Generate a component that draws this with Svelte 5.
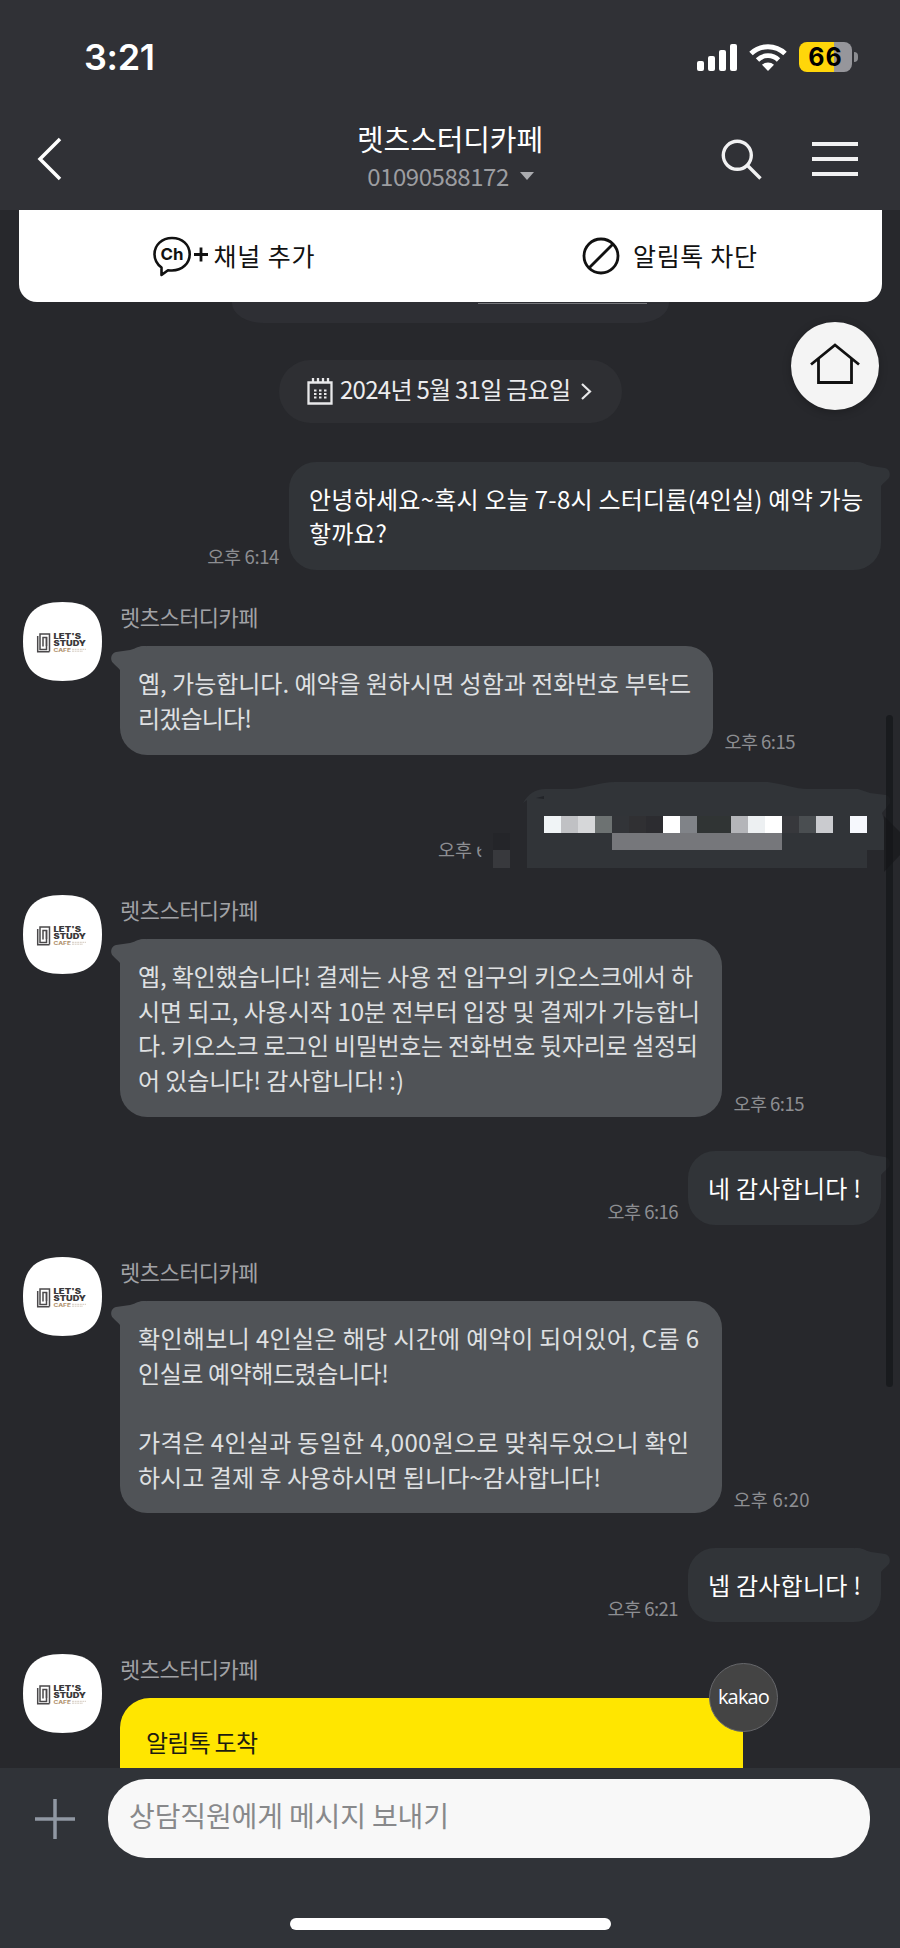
<script>
    const cafe = "렛츠스터디카페";

    const messages = [
        {
            me: true, time: "오후 6:14", timeWidth: 72, width: 592,
            lines: [
                { text: "안녕하세요~혹시 오늘 7-8시 스터디룸(4인실) 예약 가능", width: 554 },
                { text: "핳까요?", width: 78 },
            ],
        },
        {
            time: "오후 6:15", timeWidth: 71, width: 593,
            lines: [
                { text: "옙, 가능합니다. 예약을 원하시면 성함과 전화번호 부탁드", width: 553 },
                { text: "리겠습니다!", width: 114 },
            ],
        },
        { hidden: true },
        {
            time: "오후 6:15", timeWidth: 71, width: 602,
            lines: [
                { text: "옙, 확인했습니다! 결제는 사용 전 입구의 키오스크에서 하", width: 555 },
                { text: "시면 되고, 사용시작 10분 전부터 입장 및 결제가 가능합니", width: 562 },
                { text: "다. 키오스크 로그인 비밀번호는 전화번호 뒷자리로 설정되", width: 560 },
                { text: "어 있습니다! 감사합니다! :)", width: 266 },
            ],
        },
        {
            me: true, time: "오후 6:16", timeWidth: 71, width: 193,
            lines: [{ text: "네 감사합니다 !", width: 153 }],
        },
        {
            time: "오후 6:20", timeWidth: 76, width: 602,
            lines: [
                { text: "확인해보니 4인실은 해당 시간에 예약이 되어있어, C룸 6", width: 561 },
                { text: "인실로 예약해드렸습니다!", width: 251 },
                { text: "", width: 0 },
                { text: "가격은 4인실과 동일한 4,000원으로 맞춰두었으니 확인", width: 551 },
                { text: "하시고 결제 후 사용하시면 됩니다~감사합니다!", width: 463 },
            ],
        },
        {
            me: true, time: "오후 6:21", timeWidth: 71, width: 193,
            lines: [{ text: "넵 감사합니다 !", width: 153 }],
        },
        { alim: true },
    ];

    // couleurs des pixels qui cachent le numéro
    const pixels = [
        "#f0f4f6", "#c0c1c4", "#d6d7d9", "#6d7272", "#323438", "#303033", "#2c2c30",
        "#ffffff", "#808388", "#303434", "#303434", "#b4b5b9", "#edf0f2", "#ffffff",
        "#37383c", "#4a4e51", "#cacbcf", "#313438", "#f6f8fd",
    ];

    // spreads the letters of a line over the given width
    function fit(node, width) {
        const n = node.textContent.length;
        if (n < 2) return;
        const natural = node.getBoundingClientRect().width;
        node.style.letterSpacing = (width - natural) / (n - 1) + "px";
    }
</script>

{#snippet avatar()}
    <svg class="avatar" width="79" height="79" viewBox="0 0 79 79">
        <path d="M39.500 0C67 0 79 12 79 39.500S67 79 39.500 79 0 67 0 39.500 12 0 39.500 0Z" fill="#fff" />
        <g fill="none" stroke="#4b494b" stroke-width="1.500">
            <path d="M26.500 49.500v-17.500h-9.500v15.500h6.500v-12h-3.500v9" />
            <path d="M14.700 34v15.800h11.800M23.500 35v9" />
        </g>
        <g font-family="Inter, sans-serif" font-weight="900" fill="#3a383a">
            <text x="30.500" y="37" font-size="7" textLength="27.500" lengthAdjust="spacingAndGlyphs">LET'S</text>
            <text x="30.500" y="44.200" font-size="7" textLength="32.500" lengthAdjust="spacingAndGlyphs">STUDY</text>
            <text x="30.500" y="49.800" font-size="5" font-weight="700" fill="#b0916c" textLength="17.500" lengthAdjust="spacingAndGlyphs">CAFE</text>
        </g>
        <path d="M49 47.300h14M49 49.200h11" stroke="#cfc4b8" stroke-width="0.900" stroke-dasharray="2 0.600" />
    </svg>
{/snippet}

{#snippet tail()}
    <svg class="tail" width="36" height="28" viewBox="-10 0 36 28">
        <path d="M26 0H23C17 0.500 15 3 10 4L-4 6C-8 7-9.500 11-8.500 14.500C-8 17-3 20 0 24V28H26Z" />
    </svg>
{/snippet}

<div class="phone">
    <header>
        <div class="status">
            <span class="clock" use:fit={71}>3:21</span>
            <div class="indicators">
                <svg width="40" height="27" viewBox="0 0 40 27" fill="#fff">
                    <rect x="0" y="17" width="7" height="10" rx="2" />
                    <rect x="11" y="12" width="7" height="15" rx="2" />
                    <rect x="22" y="6" width="7" height="21" rx="2" />
                    <rect x="33" y="0" width="7" height="27" rx="2" />
                </svg>
                <svg class="wifi" width="38" height="28" viewBox="0 0 38 28" fill="none" stroke="#fff">
                    <path d="M2 10.500a24.500 24.500 0 0 1 34 0" stroke-width="5" />
                    <path d="M8.500 17a15 15 0 0 1 21 0" stroke-width="4.800" />
                    <path d="M19 28l-6-6.200a8.700 8.700 0 0 1 12 0z" fill="#fff" stroke="none" />
                </svg>
                <div class="battery"><span use:fit={33.500}>66</span></div>
                <i class="nub"></i>
            </div>
        </div>
        <div class="bar">
            <svg class="back" width="26" height="44" viewBox="0 0 26 44" fill="none" stroke="#fff" stroke-width="3.500">
                <path d="M23 2L3 22l20 20" />
            </svg>
            <div class="title">
                <h1><span use:fit={186}>{cafe}</span></h1>
                <p><span use:fit={142}>01090588172</span><i></i></p>
            </div>
            <div class="actions">
                <svg width="41" height="41" viewBox="0 0 41 41" fill="none" stroke="#f1f1f2" stroke-width="3.400">
                    <circle cx="16.300" cy="16.300" r="14" />
                    <path d="M26.500 26.500L39.500 39.500" />
                </svg>
                <svg width="46" height="34" viewBox="0 0 46 34" stroke="#f1f1f2" stroke-width="3.800">
                    <path d="M0 2h46M0 17h46M0 32h46" />
                </svg>
            </div>
        </div>
    </header>

    <main>
        <div class="channel">
            <div class="add">
                <svg width="56" height="41" viewBox="0 0 56 41" fill="none" stroke="#111" stroke-width="2.600">
                    <path d="M19 2C29.500 2 36.700 9 36.700 18.200S29 34.500 19 34.500q-2 0-4-.3L8.500 39V31.500C4.500 28.500 1.500 24 1.500 18.200 1.500 9 9 2 19 2Z" stroke-linejoin="round" />
                    <text x="7.500" y="24" font-family="Inter, sans-serif" font-size="16.500" font-weight="700" fill="#111" stroke="none" textLength="23" lengthAdjust="spacingAndGlyphs">Ch</text>
                    <path d="M41 18.500h14M48 11.500v14" stroke-width="2.800" />
                </svg>
                <span use:fit={101}>채널 추가</span>
            </div>
            <div class="block">
                <svg width="38" height="38" viewBox="0 0 38 38" fill="none" stroke="#111" stroke-width="2.800">
                    <circle cx="19" cy="19" r="17" />
                    <path d="M7 31L31 7" />
                </svg>
                <span use:fit={124}>알림톡 차단</span>
            </div>
        </div>

        <div class="previous"><i></i></div>

        <div class="date">
            <svg width="26" height="27" viewBox="0 0 26 27" fill="none" stroke="#e8e8ea" stroke-width="2.300">
                <path d="M1.500 4.500h23v21h-23zM6 0v5M11 0v5M16 0v5M21 0v5" />
                <path d="M7 12.500h13M7 16h13M7 19.500h13" stroke-dasharray="2.500 2.500" stroke-width="2" />
            </svg>
            <span use:fit={231}>2024년 5월 31일 금요일</span>
            <svg class="next" width="12" height="17" viewBox="0 0 12 17" fill="none" stroke="#e8e8ea" stroke-width="2.200">
                <path d="M2 1l8 7.500L2 16" />
            </svg>
        </div>

        {#each messages as m}
            {#if m.hidden}
                <div class="row me hidden">
                    <span class="time">오후 <b>6</b></span>
                    <svg class="mosaic" width="407" height="94" viewBox="493 780 407 94">
                        <path d="M884 816L900 832V855L884 872Z" fill="#1c1d20" />
                        <path d="M523 803Q531 789 545 789H571C587 788 600 782 615 782H768C784 784 795 789 808 789H858L870 793L886 795Q891 797 890 803L882 813L884 820V850H867V868H527V800Z" fill="#313438" />
                        <path d="M536 798l8-2v3z" fill="#222428" />
                        {#each pixels as color, i}
                            <rect x={544 + i * 17} y="816" width="17" height="17" fill={color} shape-rendering="crispEdges" />
                        {/each}
                        <rect x="612" y="833" width="170" height="17" fill="#76777b" />
                        <rect x="493" y="833" width="17" height="17" fill="#242529" />
                        <rect x="493" y="850" width="17" height="18" fill="#38393d" />
                    </svg>
                </div>
            {:else if m.me}
                <div class="row me">
                    <span class="time" use:fit={m.timeWidth}>{m.time}</span>
                    <div class="bubble" style="width: {m.width}px">
                        {@render tail()}
                        {#each m.lines as line}
                            <p><span use:fit={line.width}>{line.text}</span></p>
                        {/each}
                    </div>
                </div>
            {:else}
                <div class="row">
                    {@render avatar()}
                    <div class="content">
                        <div class="name"><span use:fit={138.500}>{cafe}</span></div>
                        {#if m.alim}
                            <div class="alim">
                                <span use:fit={112}>알림톡 도착</span>
                                <div class="kakao"><span use:fit={52}>kakao</span></div>
                            </div>
                        {:else}
                            <div class="line">
                                <div class="bubble" style="width: {m.width}px">
                                    {@render tail()}
                                    {#each m.lines as line}
                                        <p><span use:fit={line.width}>{line.text}</span></p>
                                    {/each}
                                </div>
                                <span class="time" use:fit={m.timeWidth}>{m.time}</span>
                            </div>
                        {/if}
                    </div>
                </div>
            {/if}
        {/each}

        <div class="scrollbar"></div>
        <div class="home">
            <svg width="50" height="42" viewBox="0 0 50 42" fill="none" stroke="#111" stroke-width="2.800">
                <path d="M1 21.500L25 2l24 19.500M8.500 16v23.500h33V16" />
            </svg>
        </div>
    </main>

    <footer>
        <div class="compose">
            <svg width="40" height="40" viewBox="0 0 40 40" stroke="#9098a3" stroke-width="3.500">
                <path d="M0 20h40M20 0v40" />
            </svg>
            <div class="input"><span use:fit={320}>상담직원에게 메시지 보내기</span></div>
        </div>
        <div class="indicator"></div>
    </footer>
</div>

<style>
    :global(body) {
        margin: 0;
        background: #27282c;
    }
    .phone {
        width: 900px;
        height: 1948px;
        display: flex;
        flex-direction: column;
        overflow: hidden;
        background: #27282c;
        font-family: "Noto Sans CJK KR", "Noto Sans", sans-serif;
        font-weight: 400;
    }
    span {
        white-space: pre;
        display: inline-block;
    }
    svg {
        display: block;
        flex: none;
    }
    p, h1 {
        margin: 0;
        font-weight: 400;
    }

    header {
        height: 210px;
        flex: none;
        background: #303136;
        color: #fff;
    }
    .status {
        height: 114px;
        box-sizing: border-box;
        padding: 0 42px 0 84px;
        display: flex;
        align-items: center;
        justify-content: space-between;
    }
    .clock {
        font: 600 36px/40px Inter, sans-serif;
    }
    .indicators {
        display: flex;
        align-items: center;
    }
    .wifi {
        margin: 0 12px 0 12px;
    }
    .battery {
        width: 53px;
        height: 30px;
        border-radius: 8px;
        background: linear-gradient(90deg, #ffd60a 66%, #96969b 66%);
        color: #000;
        font: 700 25px/30px Inter, sans-serif;
        text-align: center;
    }
    .nub {
        width: 4px;
        height: 10px;
        margin-left: 2px;
        border-radius: 0 5px 5px 0;
        background: #8b8c90;
    }
    .bar {
        height: 96px;
        display: grid;
        grid-template-columns: 200px 1fr 200px;
    }
    .back {
        margin: 23px 0 0 37px;
    }
    .title {
        text-align: center;
    }
    .title h1 {
        font-size: 29px;
        line-height: 40px;
        padding-top: 4px;
    }
    .title p {
        display: flex;
        align-items: center;
        justify-content: center;
        padding: 1px 0 0 1px;
        font-size: 24px;
        line-height: 34px;
        color: #9c9da1;
    }
    .title i {
        margin-left: 11px;
        border: 7px solid transparent;
        border-top: 8px solid #aaabaf;
        border-bottom: 0;
    }
    .actions {
        display: flex;
        justify-content: flex-end;
        gap: 50px;
        padding: 25px 42px 0 0;
        align-items: flex-start;
    }
    .actions svg:last-child {
        margin-top: 3px;
    }

    main {
        flex: 1;
        min-height: 0;
        position: relative;
        overflow: hidden;
    }
    .channel {
        height: 92px;
        margin: 0 18.500px;
        border-radius: 0 0 18px 18px;
        background: #fff;
        color: #111;
        display: grid;
        grid-template-columns: 1fr 1fr;
        font-size: 25px;
        line-height: 36px;
    }
    .add, .block {
        display: flex;
        align-items: center;
    }
    .add span, .block span {
        margin-bottom: 3px;
    }
    .add {
        padding-left: 134px;
        gap: 5px;
    }
    .block {
        padding-left: 132px;
        gap: 13px;
    }
    .previous {
        width: 437px;
        height: 21px;
        margin: 0 auto;
        border-radius: 0 0 32px 32px / 0 0 20px 20px;
        background: #2e2f34;
        overflow: hidden;
    }
    .previous i {
        display: block;
        width: 169px;
        height: 1px;
        margin: 1px 0 0 246px;
        background: #75767a;
    }
    .date {
        width: 343px;
        height: 63px;
        box-sizing: border-box;
        margin: 37px auto 38.700px 279px;
        padding-left: 28px;
        border-radius: 32px;
        background: #2e2f33;
        color: #ececee;
        display: flex;
        align-items: center;
        font-size: 24px;
        line-height: 34px;
    }
    .date span {
        margin: 0 10px 5px 7px;
    }

    .row {
        display: flex;
        align-items: flex-start;
        padding-left: 23px;
    }
    .content {
        margin-left: 18px;
    }
    .name {
        height: 44.200px;
        font-size: 22px;
        line-height: 29px;
        color: #a1a2a6;
    }
    .line {
        display: flex;
        align-items: flex-end;
        gap: 11.500px;
    }
    .bubble {
        position: relative;
        box-sizing: border-box;
        padding: 20px 0 19.200px 18px;
        border-radius: 27px;
        background: #505357;
        color: #dfe0e2;
        fill: #505357;
        font-size: 24px;
    }
    .bubble p {
        position: relative;
        height: 34.600px;
        line-height: 34.600px;
        white-space: nowrap;
    }
    .tail {
        position: absolute;
        top: 0;
        left: -10px;
    }
    .me {
        justify-content: flex-end;
        align-items: flex-end;
        gap: 10px;
        padding: 0 19px 32.100px 0;
    }
    .me .bubble {
        padding-left: 20px;
        background: #313438;
        fill: #313438;
        color: #fff;
    }
    .me .tail {
        left: auto;
        right: -10px;
        transform: scaleX(-1);
    }
    .row:not(.me) {
        margin-bottom: 34.500px;
    }
    .time {
        margin-bottom: 1px;
        font-size: 18.500px;
        line-height: 26px;
        color: #8d8e92;
    }
    .hidden {
        position: relative;
        height: 73.600px;
    }
    .hidden .time {
        width: 443px;
    }
    .hidden b {
        display: inline-block;
        font-weight: 400;
        clip-path: inset(42% 50% 0 0);
    }
    .mosaic {
        position: absolute;
        right: 0;
        top: -9.500px;
    }

    .alim {
        position: relative;
        width: 623px;
        height: 120px;
        box-sizing: border-box;
        padding: 26px 0 0 26px;
        border-radius: 30px 0 0 0;
        background: #ffe600;
        color: #1d1c10;
        font-size: 24px;
        line-height: 36px;
    }
    .kakao {
        position: absolute;
        top: -35px;
        right: -35px;
        width: 67px;
        height: 67px;
        border: 1px solid #66676b;
        border-radius: 50%;
        background: #444;
        color: #fff;
        text-align: center;
        font: 400 20px/66px "Open Sans", sans-serif;
    }
    .scrollbar {
        position: absolute;
        top: 505px;
        right: 7px;
        width: 7px;
        height: 672px;
        border-radius: 4px;
        background: rgba(20, 21, 24, 0.700);
    }
    .home {
        position: absolute;
        top: 111.500px;
        right: 21px;
        width: 88px;
        height: 88px;
        border-radius: 50%;
        background: #f4f4f4;
        box-shadow: 0 2px 8px rgba(0, 0, 0, 0.250);
        display: flex;
        align-items: center;
        justify-content: center;
    }
    .home svg {
        margin-bottom: 4px;
    }

    footer {
        height: 180px;
        flex: none;
        background: #303338;
    }
    .compose {
        display: flex;
        align-items: center;
        gap: 33px;
        padding: 11px 30px 0 35px;
    }
    .input {
        flex: 1;
        height: 79px;
        box-sizing: border-box;
        padding: 15px 0 0 21px;
        border-radius: 38px;
        background: #f8f8f8;
        color: #88898b;
        font-size: 28px;
        line-height: 42px;
    }
    .indicator {
        width: 321px;
        height: 12px;
        margin: 60px auto 0;
        border-radius: 6px;
        background: #fff;
    }
</style>
